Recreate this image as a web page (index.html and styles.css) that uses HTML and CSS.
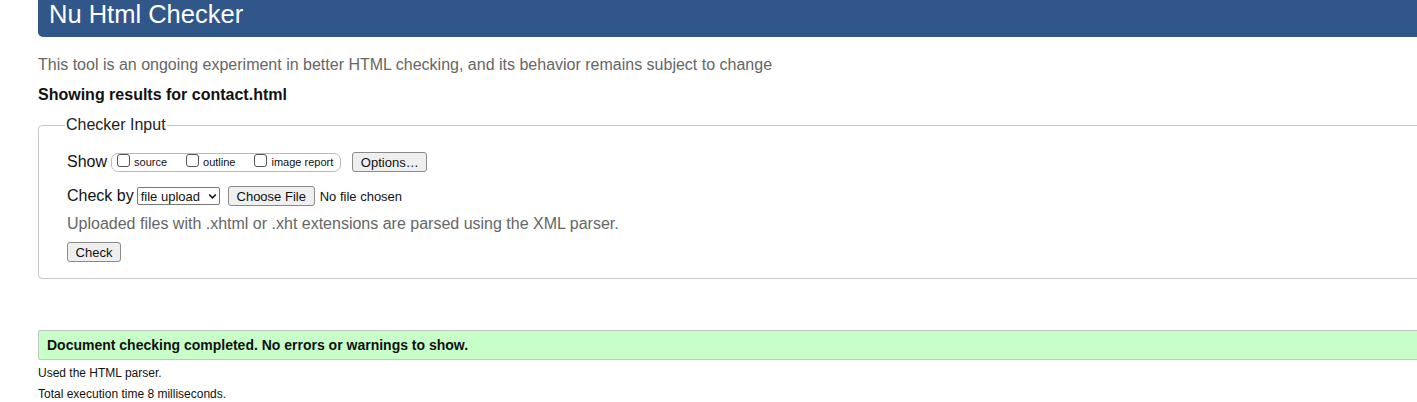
FILE: index.html
```html
<!DOCTYPE html>
<html lang="en">
<head>
<meta charset="utf-8">
<title>Nu Html Checker</title>
<link rel="stylesheet" href="styles.css">
</head>
<body>
<div class="page">
  <h1 class="title">Nu Html Checker</h1>
  <p class="intro">This tool is an ongoing experiment in better HTML checking, and its behavior remains subject to change</p>
  <p class="showing">Showing results for contact.html</p>
  <fieldset class="checker">
    <legend class="legend">Checker Input</legend>
    <div class="row show-row">
      <span class="lbl">Show</span>
      <span class="opts">
        <label class="opt"><span class="box"></span>source</label>
        <label class="opt"><span class="box"></span>outline</label>
        <label class="opt"><span class="box"></span>image report</label>
      </span>
      <span class="btn opt-btn">Options…</span>
    </div>
    <div class="row by-row">
      <span class="lbl">Check by</span>
      <span class="select">file upload<svg class="chev" viewBox="0 0 10 8" width="9" height="7"><path d="M1.2 1.8 L5 5.6 L8.8 1.8" fill="none" stroke="#111" stroke-width="1.7"/></svg></span>
      <span class="btn file-btn">Choose File</span>
      <span class="nofile">No file chosen</span>
    </div>
    <p class="note">Uploaded files with .xhtml or .xht extensions are parsed using the XML parser.</p>
    <div class="row check-row"><span class="btn check-btn">Check</span></div>
  </fieldset>
  <div class="success">Document checking completed. No errors or warnings to show.</div>
  <p class="meta">Used the HTML parser.</p>
  <p class="meta">Total execution time 8 milliseconds.</p>
</div>
</body>
</html>
```

FILE: styles.css
```css
html, body {
  margin: 0;
  padding: 0;
  overflow: hidden;
  background: #fff;
}
body {
  font-family: "Liberation Sans", Arial, Helvetica, sans-serif;
  color: #111;
}
.page {
  margin-left: 38px;
  width: 1440px;
}
.title {
  margin: 0;
  height: 37px;
  box-sizing: border-box;
  padding: 0 0 0 11px;
  background: #30568a;
  color: #fff;
  font-weight: normal;
  font-size: 25.5px;
  line-height: 28px;
  border-bottom-left-radius: 5px;
}
.intro {
  margin: 18px 0 0;
  font-size: 16px;
  line-height: 20px;
  color: #666;
}
.showing {
  margin: 10px 0 0;
  font-size: 16px;
  line-height: 20px;
  font-weight: bold;
  color: #111;
}
.checker {
  margin: 11px 0 0;
  padding: 17px 0 16px 28px;
  border: 1px solid #c8c8c8;
  border-radius: 4px;
  min-width: 0;
}
.legend {
  margin-left: -2px;
  padding: 0 1px;
  font-size: 16px;
  line-height: 18px;
  color: #222;
}
.row {
  display: flex;
  align-items: center;
}
.lbl {
  font-size: 16px;
  color: #111;
}
.show-row {
  height: 22px;
}
.opts {
  display: flex;
  align-items: center;
  margin-left: 4px;
  height: 19px;
  box-sizing: border-box;
  border: 1px solid #bbb;
  border-radius: 7px;
  padding: 0 7px 0 5px;
}
.opt {
  display: flex;
  align-items: center;
  font-size: 11px;
  color: #111;
  margin-right: 19px;
}
.opt:last-child {
  margin-right: 0;
}
.box {
  display: inline-block;
  width: 13px;
  height: 13px;
  box-sizing: border-box;
  border: 1px solid #555;
  border-radius: 3px;
  margin: -4px 4px 0 0;
  background: #fff;
}
.btn {
  display: inline-flex;
  align-items: center;
  justify-content: center;
  box-sizing: border-box;
  height: 20px;
  border: 1px solid #8a8a8a;
  border-radius: 3px;
  background: #efefef;
  font-size: 13px;
  color: #111;
}
.opt-btn {
  margin-left: 11px;
  width: 75px;
}
.by-row {
  margin-top: 12px;
  height: 22px;
}
.select {
  display: inline-flex;
  align-items: center;
  margin-left: 3px;
  height: 18px;
  box-sizing: border-box;
  border: 1px solid #777;
  border-radius: 2px;
  padding: 0 2px 0 3px;
  font-size: 13px;
  color: #111;
  width: 83px;
  justify-content: space-between;
}
.chev {
  display: block;
}
.file-btn {
  margin-left: 8px;
  width: 87px;
}
.nofile {
  margin-left: 5px;
  font-size: 13px;
  color: #111;
}
.note {
  margin: 7px 0 0;
  font-size: 16px;
  line-height: 20px;
  color: #666;
}
.check-row {
  margin-top: 8px;
}
.check-btn {
  width: 54px;
}
.success {
  margin-top: 51px;
  height: 30px;
  box-sizing: border-box;
  padding: 0 0 0 8px;
  background: #c8ffc8;
  border: 1px solid #c4c4c4;
  border-radius: 2px;
  font-size: 14px;
  font-weight: bold;
  line-height: 28px;
  color: #111;
}
.meta {
  margin: 6px 0 0;
  font-size: 12px;
  line-height: 14px;
  color: #111;
}
.meta + .meta {
  margin-top: 7px;
}
```
